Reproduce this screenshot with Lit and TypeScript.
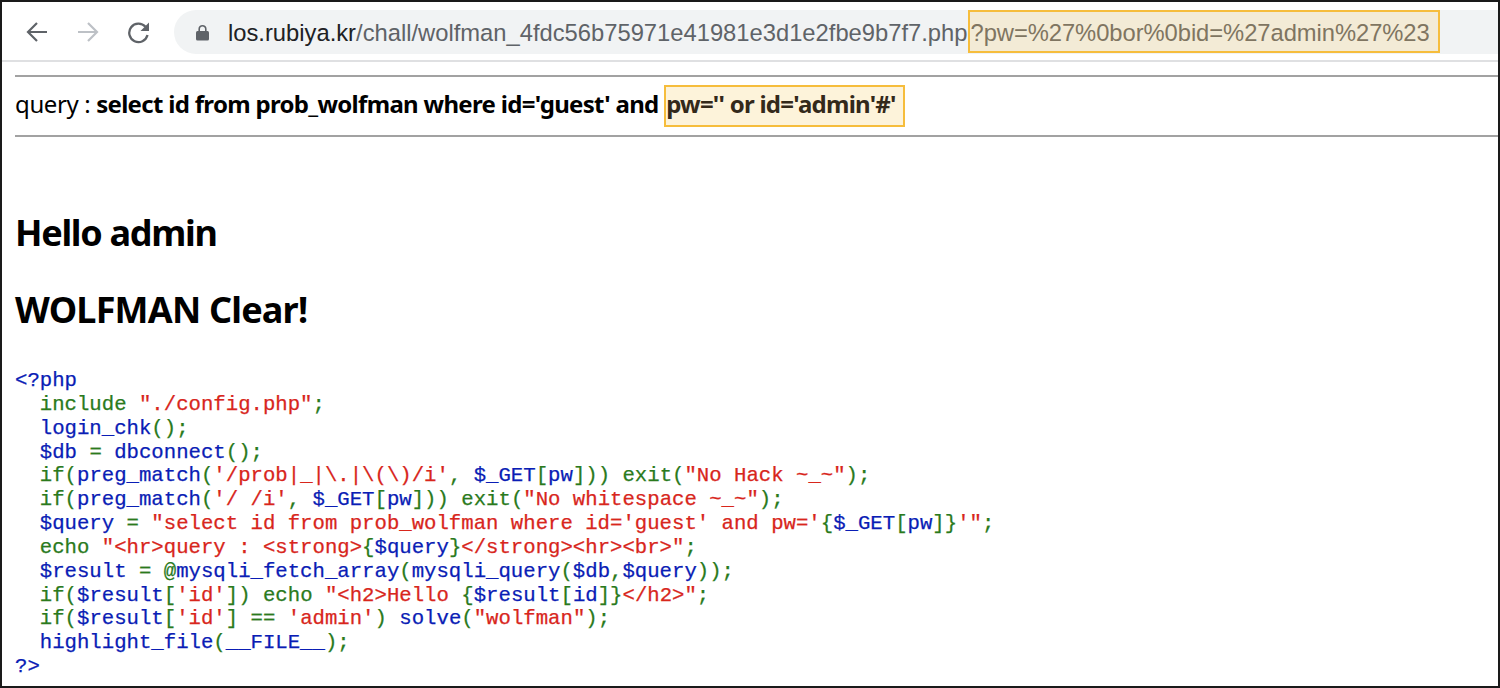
import { LitElement, html, css } from "lit";
import { customElement } from "lit/decorators.js";

type Seg = [string, string];
const b = (t: string): Seg => ["b", t];
const g = (t: string): Seg => ["g", t];
const r = (t: string): Seg => ["r", t];

const CODE: Seg[][] = [
  [b("<?php")],
  [g("  include "), r('"./config.php"'), g(";")],
  [b("  login_chk"), g("();")],
  [b("  $db"), g(" = "), b("dbconnect"), g("();")],
  [g("  if("), b("preg_match"), g("("), r("'/prob|_|\\.|\\(\\)/i'"), g(", "), b("$_GET"), g("["), b("pw"), g("]))"), g(" exit("), r('"No Hack ~_~"'), g(");")],
  [g("  if("), b("preg_match"), g("("), r("'/ /i'"), g(", "), b("$_GET"), g("["), b("pw"), g("]))"), g(" exit("), r('"No whitespace ~_~"'), g(");")],
  [b("  $query"), g(" = "), r("\"select id from prob_wolfman where id='guest' and pw='"), g("{"), b("$_GET"), g("["), b("pw"), g("]}"), r("'\""), g(";")],
  [g("  echo "), r('"<hr>query : <strong>'), g("{"), b("$query"), g("}"), r('</strong><hr><br>"'), g(";")],
  [b("  $result"), g(" = @"), b("mysqli_fetch_array"), g("("), b("mysqli_query"), g("("), b("$db"), g(","), b("$query"), g("));")],
  [g("  if("), b("$result"), g("["), r("'id'"), g("])"), g(" echo "), r('"<h2>Hello '), g("{"), b("$result"), g("["), b("id"), g("]}"), r('</h2>"'), g(";")],
  [g("  if("), b("$result"), g("["), r("'id'"), g("] == "), r("'admin'"), g(") "), b("solve"), g("("), r('"wolfman"'), g(");")],
  [b("  highlight_file"), g("("), b("__FILE__"), g(");")],
  [b("?>")],
];

@customElement("app-root")
export class AppRoot extends LitElement {
  static styles = css`
    :host {
      display: block;
      width: 1500px;
      height: 688px;
    }
    .frame {
      box-sizing: border-box;
      width: 1500px;
      height: 688px;
      border: 2px solid #1a1a1a;
      background: #fff;
      overflow: hidden;
    }
    .toolbar {
      box-sizing: border-box;
      height: 60px;
      padding-top: 8px;
      display: flex;
      align-items: flex-start;
      border-bottom: 2px solid #dfe0e2;
    }
    .nav {
      display: flex;
      width: 172px;
      flex: none;
      padding: 10px 0 0 24px;
      box-sizing: border-box;
      gap: 29px;
    }
    .nav svg {
      width: 22px;
      height: 24px;
      display: block;
      flex: none;
    }
    .pill {
      flex: 1;
      height: 44px;
      background: #f1f3f4;
      border-radius: 22px 0 0 22px;
      display: flex;
      align-items: center;
      padding-left: 21px;
      white-space: nowrap;
      font-family: "Liberation Sans", Arial, sans-serif;
      font-size: 23.75px;
      color: #5f6368;
    }
    .pill > span,
    .qs > span {
      padding-top: 2px;
    }
    .lock {
      width: 15px;
      height: 18px;
      flex: none;
      margin-right: 18px;
    }
    .host-name {
      color: #202124;
    }
    .qs {
      box-sizing: border-box;
      height: 43px;
      width: 472px;
      margin: -1px 0 0 1px;
      display: flex;
      align-items: center;
      background: #f3ebd6;
      border: 2px solid #f6bd3c;
      color: #7f7561;
      letter-spacing: -0.05px;
    }
    .page {
      padding-left: 13px;
    }
    .rule {
      height: 2px;
      background: #a2a2a2;
    }
    .rule.first {
      margin-top: 13px;
    }
    .query {
      height: 58px;
      display: flex;
      align-items: center;
      white-space: pre;
      font-family: "Noto Sans", sans-serif;
      font-size: 24px;
      color: #000;
    }
    .query .label {
      letter-spacing: -0.38px;
      padding-bottom: 6px;
    }
    .query strong {
      font-weight: 700;
      letter-spacing: -0.69px;
      padding-bottom: 6px;
    }
    .mark {
      box-sizing: border-box;
      height: 42px;
      width: 241px;
      display: flex;
      align-items: center;
      padding: 0 0 6px 0;
      background: #fdf3da;
      border: 2px solid #f6bd3c;
      color: #33291a;
      font-weight: 700;
      letter-spacing: -0.74px;
    }
    h2 {
      margin: 0;
      font-family: "Noto Sans", sans-serif;
      font-size: 36px;
      line-height: 40px;
      font-weight: 700;
      color: #000;
    }
    h2.hello {
      margin-top: 76px;
      letter-spacing: -1.3px;
    }
    h2.clear {
      margin-top: 37px;
      letter-spacing: -0.8px;
    }
    .code {
      margin-top: 39px;
      font-family: "Liberation Mono", "Courier New", monospace;
      font-size: 20.66px;
      line-height: 23.85px;
      -webkit-text-stroke: 0.25px currentColor;
    }
    .code .line {
      height: 23.85px;
      white-space: pre;
    }
    .b { color: #0a1db5; }
    .g { color: #2a7a1c; }
    .r { color: #d8261c; }
  `;

  render() {
    return html`
      <div class="frame">
        <div class="toolbar">
          <div class="nav">
            <svg viewBox="0 0 22 24" fill="none" stroke="#5f6368" stroke-width="2.2">
              <path d="M21 12H2M11 3l-9 9 9 9" />
            </svg>
            <svg viewBox="0 0 22 24" fill="none" stroke="#bdc1c6" stroke-width="2.2">
              <path d="M1 12h19M11 3l9 9-9 9" />
            </svg>
            <svg viewBox="0 0 22 24" fill="none" stroke="#5f6368" stroke-width="2.3">
              <path d="M17.5 6.8A9.25 9.25 0 1 0 19.5 15" />
              <path d="M21 2.5v8.5h-8.5z" fill="#5f6368" stroke="none" />
            </svg>
          </div>
          <div class="pill">
            <svg class="lock" viewBox="0 0 15 18">
              <path d="M4.2 9V6a3.3 3.3 0 0 1 6.6 0v3" fill="none" stroke="#5f6368" stroke-width="1.6" />
              <rect x="1" y="8" width="13" height="9.5" rx="1.5" fill="#5f6368" />
            </svg>
            <span class="host-name">los.rubiya.kr</span><span>/chall/wolfman_4fdc56b75971e41981e3d1e2fbe9b7f7.php</span>
            <div class="qs"><span>?pw=%27%0bor%0bid=%27admin%27%23</span></div>
          </div>
        </div>
        <div class="page">
          <div class="rule first"></div>
          <div class="query"><span class="label">query : </span><strong>select id from prob_wolfman where id='guest' and </strong><span class="mark">pw='' or id='admin'#'</span></div>
          <div class="rule"></div>
          <h2 class="hello">Hello admin</h2>
          <h2 class="clear">WOLFMAN Clear!</h2>
          <div class="code">${CODE.map(
            (line) => html`<div class="line">${line.map(([c, t]) => html`<span class=${c}>${t}</span>`)}</div>`
          )}</div>
        </div>
      </div>
    `;
  }
}
